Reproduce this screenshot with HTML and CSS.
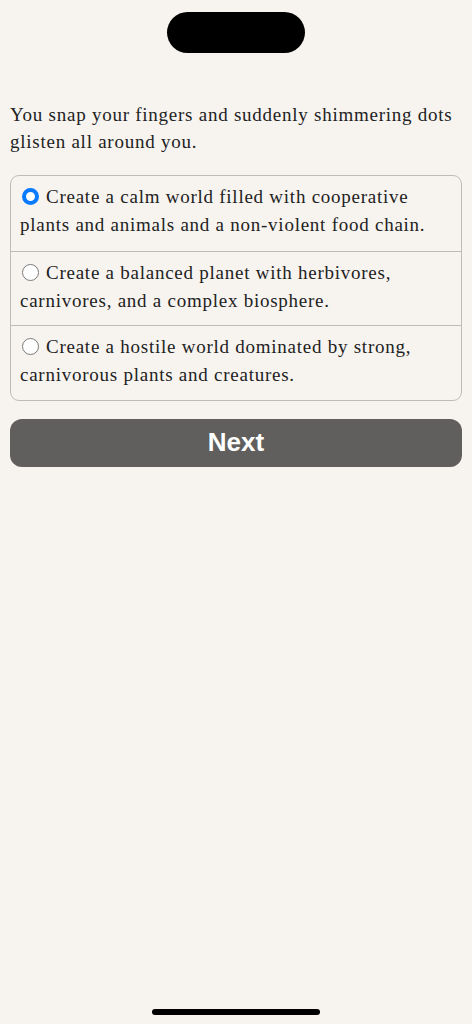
FILE: index.html
```html
<!DOCTYPE html>
<html lang="en">
<head>
<meta charset="utf-8">
<title>Story</title>
<link rel="stylesheet" href="styles.css">
</head>
<body>
<div class="screen">
  <div class="island"></div>
  <main class="content">
    <p class="prompt">You snap your fingers and suddenly shimmering dots glisten all around you.</p>
    <div class="choices">
      <label class="choice">
        <span class="radio selected"></span>Create a calm world filled with cooperative plants and animals and a non-violent food chain.
      </label>
      <label class="choice">
        <span class="radio"></span>Create a balanced planet with herbivores, carnivores, and a complex biosphere.
      </label>
      <label class="choice">
        <span class="radio"></span>Create a hostile world dominated by strong, carnivorous plants and creatures.
      </label>
    </div>
    <button class="next">Next</button>
  </main>
  <div class="home-indicator"></div>
</div>
</body>
</html>
```
FILE: styles.css
```css
* { box-sizing: border-box; }
html, body {
  margin: 0;
  padding: 0;
  background: #f7f4f0;
}
.screen {
  position: relative;
  width: 472px;
  height: 1024px;
  background: #f7f4f0;
  display: flex;
  flex-direction: column;
  align-items: center;
}
.island {
  margin-top: 12px;
  width: 138px;
  height: 41px;
  border-radius: 21px;
  background: #000;
  flex: none;
}
.content {
  width: 100%;
  padding: 0 10px;
  display: flex;
  flex-direction: column;
}
.prompt {
  margin: 48px 0 0;
  font-family: "Liberation Serif", serif;
  font-size: 19px;
  line-height: 27px;
  color: #222;
  letter-spacing: 0.75px;
}
.choices {
  margin-top: 20px;
  border: 1px solid #bdbcba;
  border-radius: 9px;
  display: flex;
  flex-direction: column;
}
.choice {
  display: block;
  height: 74.5px;
  padding: 7px 9px 0;
  font-family: "Liberation Serif", serif;
  font-size: 19px;
  line-height: 28px;
  color: #222;
  letter-spacing: 0.75px;
}
.choice + .choice {
  border-top: 1px solid #bdbcba;
}
.radio {
  display: inline-block;
  width: 17px;
  height: 17px;
  border-radius: 50%;
  border: 1.5px solid #7a7a7a;
  background: #fff;
  vertical-align: -2px;
  margin: 0 7px 0 2px;
}
.radio.selected {
  border: 4.5px solid #0a7aff;
}
.next {
  margin-top: 18px;
  height: 48px;
  border: none;
  border-radius: 12px;
  background: #605f5d;
  color: #fff;
  font-family: "Liberation Sans", Arial, sans-serif;
  font-weight: bold;
  font-size: 26px;
  padding: 0;
}
.home-indicator {
  position: absolute;
  left: 152px;
  top: 1009px;
  width: 168px;
  height: 6px;
  border-radius: 3px;
  background: #000;
}
```
